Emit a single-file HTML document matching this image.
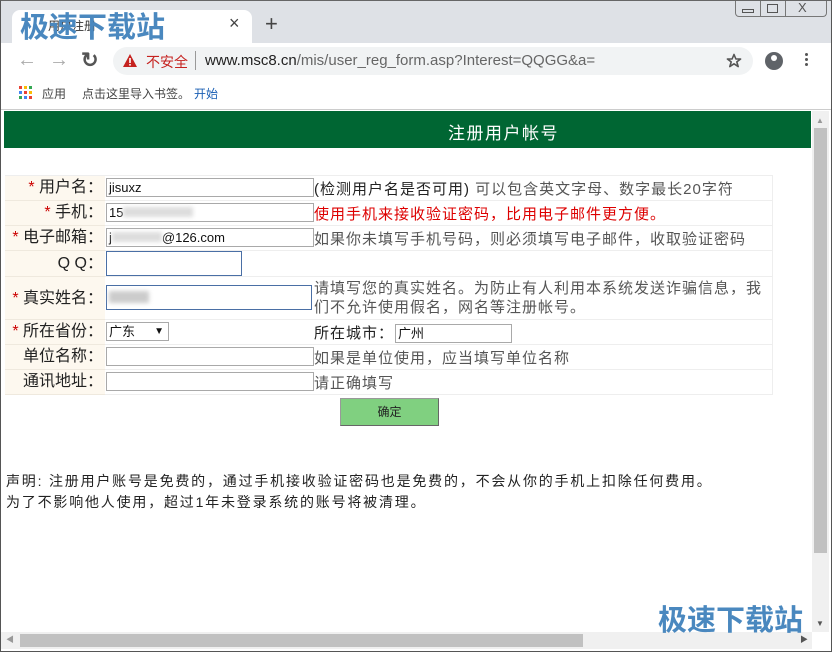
<!DOCTYPE html>
<html><head><meta charset="utf-8"><style>
*{margin:0;padding:0;box-sizing:border-box}
body{width:832px;height:652px;overflow:hidden;background:#fff;font-family:"Liberation Sans","Noto Sans CJK SC",sans-serif;position:relative}
.a{position:absolute}
.cn{font-family:"Liberation Sans","Noto Sans CJK SC","WenQuanYi Zen Hei",sans-serif}
.lab{position:absolute;left:5px;width:100px;background:#fdf8ef;text-align:right;font-size:16px;color:#222;border-bottom:1px solid #efe9de;padding-right:2px;white-space:nowrap}
.lab b{color:#c00;font-weight:normal}
.inp{position:absolute;border:1px solid #a9a9a9;background:#fff;font-size:13px;padding-left:2px;color:#111;height:19px;line-height:17px}
.desc{position:absolute;left:314px;font-size:15px;letter-spacing:1px;color:#555;white-space:nowrap}
.row{position:absolute;left:105px;width:668px;border-bottom:1px solid #eee}
</style></head><body>
<div class="a" style="left:0;top:0;width:832px;height:652px;border:1px solid #555;border-top-color:#666"></div>
<div class="a" style="left:1px;top:1px;width:830px;height:42px;background:#dee1e6"></div>
<div class="a" style="left:12px;top:10px;width:240px;height:33px;background:#fff;border-radius:8px 8px 0 0"></div>
<div class="a cn" style="left:48px;top:17px;font-size:12px;color:#333">用户注册</div>
<div class="a" style="left:229px;top:13px;font-size:18px;color:#444">×</div>
<div class="a" style="left:265px;top:11px;font-size:22px;color:#444">+</div>
<div class="a" style="left:735px;top:1px;width:92px;height:16px;border:1px solid #777;border-top:none;border-radius:0 0 4px 4px;background:#dee1e6"></div>
<div class="a" style="left:760px;top:1px;width:1px;height:16px;background:#777"></div>
<div class="a" style="left:785px;top:1px;width:1px;height:16px;background:#777"></div>
<div class="a" style="left:742px;top:9px;width:12px;height:4px;border:1px solid #555"></div>
<div class="a" style="left:767px;top:4px;width:11px;height:9px;border:1px solid #555"></div>
<div class="a" style="left:798px;top:0px;font-size:13px;color:#555">X</div>
<div class="a cn" style="left:20px;top:10px;font-size:29px;font-weight:bold;color:#4a88bf;line-height:36px">极速下载站</div>
<div class="a" style="left:17px;top:49px;font-size:20px;color:#aaa">←</div>
<div class="a" style="left:49px;top:49px;font-size:20px;color:#aaa">→</div>
<div class="a" style="left:81px;top:48px;font-size:21px;color:#555;font-weight:bold">↻</div>
<div class="a" style="left:113px;top:47px;width:640px;height:28px;background:#f1f3f4;border-radius:14px"></div>
<svg class="a" style="left:122px;top:53px" width="16" height="15"><path d="M8 1L15 14H1Z" fill="#c5221f"/><rect x="7.2" y="5" width="1.6" height="5" fill="#fff"/><rect x="7.2" y="11" width="1.6" height="1.6" fill="#fff"/></svg>
<div class="a cn" style="left:146px;top:52px;font-size:14px;color:#c5221f">不安全</div>
<div class="a" style="left:195px;top:51px;width:1px;height:19px;background:#999"></div>
<div class="a" style="left:205px;top:52px;font-size:15px;color:#666"><span style="color:#222">www.msc8.cn</span>/mis/user_reg_form.asp?Interest=QQGG&amp;a=</div>
<svg class="a" style="left:726px;top:53px" width="16" height="16"><path d="M8 1.5L9.9 6H14.6L10.8 8.9L12.2 13.6L8 10.8L3.8 13.6L5.2 8.9L1.4 6H6.1Z" fill="none" stroke="#555" stroke-width="1.6" stroke-linejoin="round"/></svg>
<div class="a" style="left:765px;top:52px;width:18px;height:18px;border-radius:50%;background:#5f6368"></div>
<div class="a" style="left:771px;top:55px;width:6px;height:6px;border-radius:50%;background:#fff"></div>
<div class="a" style="left:805px;top:53px;width:3px;height:3px;background:#555;box-shadow:0 5px #555,0 10px #555;border-radius:50%"></div>
<svg class="a" style="left:19px;top:86px" width="13" height="13"><g><rect x="0" y="0" width="3" height="3" fill="#e94235"/><rect x="5" y="0" width="3" height="3" fill="#fbbc04"/><rect x="10" y="0" width="3" height="3" fill="#34a853"/><rect x="0" y="5" width="3" height="3" fill="#4285f4"/><rect x="5" y="5" width="3" height="3" fill="#e94235"/><rect x="10" y="5" width="3" height="3" fill="#fbbc04"/><rect x="0" y="10" width="3" height="3" fill="#34a853"/><rect x="5" y="10" width="3" height="3" fill="#4285f4"/><rect x="10" y="10" width="3" height="3" fill="#e94235"/></g></svg>
<div class="a cn" style="left:42px;top:85px;font-size:12px;color:#444">应用</div>
<div class="a cn" style="left:82px;top:85px;font-size:12px;color:#444">点击这里导入书签。</div>
<div class="a cn" style="left:194px;top:85px;font-size:12px;color:#1a5fb4">开始</div>
<div class="a" style="left:1px;top:109px;width:830px;height:1px;background:#ccc"></div>
<div class="a" style="left:4px;top:111px;width:807px;height:37px;background:#006633"></div>
<div class="a cn" style="left:448px;top:119px;font-size:17px;letter-spacing:1.5px;color:#fff">注册用户帐号</div>
<div class="a" style="left:5px;top:175px;width:768px;height:220px;border:1px solid #eee"></div>

<div class="lab cn" style="top:176px;height:25px;line-height:24px"><b>*</b> 用户名：</div>
<div class="lab cn" style="top:201px;height:25px;line-height:24px"><b>*</b> 手机：</div>
<div class="lab cn" style="top:226px;height:25px;line-height:24px"><b>*</b> 电子邮箱：</div>
<div class="lab cn" style="top:251px;height:26px;line-height:26px">Q Q：</div>
<div class="lab cn" style="top:277px;height:43px;line-height:43px"><b>*</b> 真实姓名：</div>
<div class="lab cn" style="top:320px;height:25px;line-height:24px"><b>*</b> 所在省份：</div>
<div class="lab cn" style="top:345px;height:25px;line-height:24px">单位名称：</div>
<div class="lab cn" style="top:370px;height:25px;line-height:24px">通讯地址：</div>
<div class="row" style="top:176px;height:25px"></div><div class="row" style="top:201px;height:25px"></div><div class="row" style="top:226px;height:25px"></div><div class="row" style="top:251px;height:26px"></div><div class="row" style="top:277px;height:43px"></div><div class="row" style="top:320px;height:25px"></div><div class="row" style="top:345px;height:25px"></div>

<div class="inp" style="left:106px;top:178px;width:208px">jisuxz</div>
<div class="inp" style="left:106px;top:203px;width:208px">15<span style="display:inline-block;width:70px;height:10px;background:#ddd;filter:blur(2px)"></span></div>
<div class="inp" style="left:106px;top:228px;width:208px">j<span style="display:inline-block;width:50px;height:10px;background:#ddd;filter:blur(2px)"></span>@126.com</div>
<div class="inp" style="left:106px;top:251px;width:136px;height:25px;border:1px solid #4a6fa5"></div>
<div class="inp" style="left:106px;top:285px;width:206px;height:25px;border:1px solid #4a6fa5"><span style="display:inline-block;width:40px;height:12px;margin-top:5px;background:#ccc;filter:blur(2px)"></span></div>
<div class="inp cn" style="left:106px;top:322px;width:63px">广东<span style="position:absolute;right:4px;font-size:10px">▼</span></div>
<div class="inp" style="left:106px;top:347px;width:208px"></div>
<div class="inp" style="left:106px;top:372px;width:208px"></div>

<div class="desc cn" style="top:178px"><span style="color:#222">(检测用户名是否可用)</span> 可以包含英文字母、数字最长20字符</div>
<div class="desc cn" style="top:203px;color:#d00">使用手机来接收验证密码，比用电子邮件更方便。</div>
<div class="desc cn" style="top:228px">如果你未填写手机号码，则必须填写电子邮件，收取验证密码</div>
<div class="desc cn" style="top:279px;line-height:19px">请填写您的真实姓名。为防止有人利用本系统发送诈骗信息，我<br>们不允许使用假名，网名等注册帐号。</div>
<div class="desc cn" style="top:322px;color:#222">所在城市：</div>
<div class="inp cn" style="left:395px;top:324px;width:117px">广州</div>
<div class="desc cn" style="top:347px">如果是单位使用，应当填写单位名称</div>
<div class="desc cn" style="top:372px">请正确填写</div>
<div class="a cn" style="left:340px;top:398px;width:99px;height:28px;background:#80d080;border:1px solid #999;border-right-color:#666;border-bottom-color:#666;text-align:center;line-height:26px;font-size:12px;color:#222">确定</div>
<div class="a cn" style="left:6px;top:471px;font-size:14px;letter-spacing:1.8px;color:#222;line-height:21px;white-space:nowrap">声明: 注册用户账号是免费的，通过手机接收验证密码也是免费的，不会从你的手机上扣除任何费用。<br>为了不影响他人使用，超过1年未登录系统的账号将被清理。</div>
<div class="a" style="left:812px;top:111px;width:17px;height:521px;background:#f0f0f0"></div>
<div class="a" style="left:814px;top:128px;width:13px;height:425px;background:#c1c1c1"></div>
<div class="a" style="left:816px;top:116px;font-size:8px;color:#999">▲</div>
<div class="a" style="left:816px;top:619px;font-size:8px;color:#555">▼</div>
<div class="a" style="left:1px;top:632px;width:811px;height:17px;background:#f0f0f0"></div>
<div class="a" style="left:20px;top:634px;width:563px;height:13px;background:#c1c1c1"></div>
<div class="a" style="left:6px;top:634px;font-size:8px;color:#999">◀</div>
<div class="a" style="left:800px;top:634px;font-size:8px;color:#555">▶</div>
<div class="a cn" style="left:658px;top:603px;font-size:29px;font-weight:bold;color:#4a88bf;line-height:36px">极速下载站</div>
</body></html>
